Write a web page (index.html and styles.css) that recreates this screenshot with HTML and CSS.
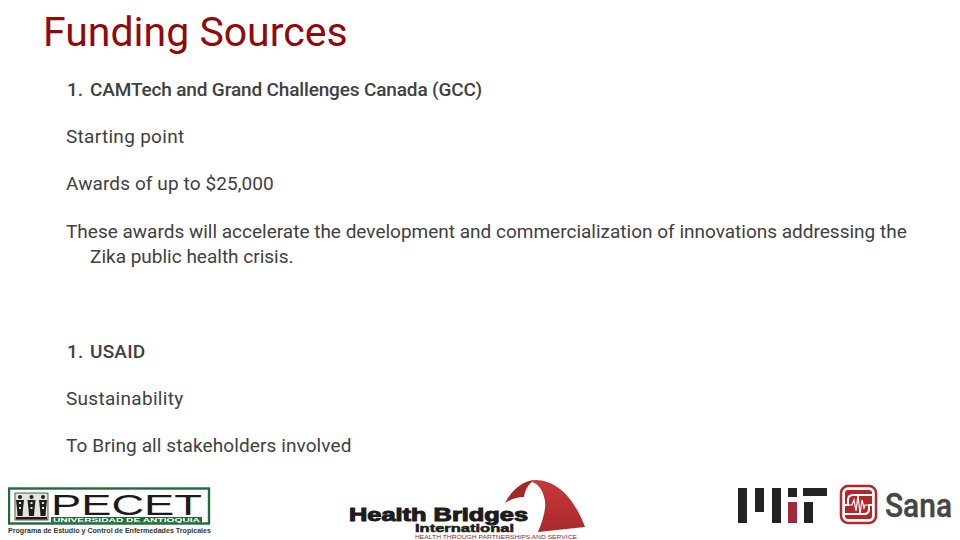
FILE: index.html
```html
<!DOCTYPE html>
<html lang="en">
<head>
  <meta charset="UTF-8" />
  <meta name="viewport" content="width=device-width, initial-scale=1.0"/>
  <title>Funding Sources</title>
  <link rel="stylesheet" href="styles.css">
</head>
<body>
  <div class="slide">
    <h1 class="title">Funding Sources</h1>

    <div class="content">
      <p class="item head"><span class="num">1.</span><span>CAMTech and Grand Challenges Canada (GCC)</span></p>
      <p class="item wide">Starting point</p>
      <p class="item">Awards of up to $25,000</p>
      <p class="item hang">These awards will accelerate the development and commercialization of innovations addressing the Zika public health crisis.</p>
      <p class="item head section"><span class="num">1.</span><span>USAID</span></p>
      <p class="item wide">Sustainability</p>
      <p class="item last">To Bring all stakeholders involved</p>
    </div>

    <div class="footer">
      <!-- PECET -->
      <svg class="logo logo-pecet" width="206" height="62" viewBox="8 478 206 62">
        <rect x="9" y="488.5" width="200" height="35" fill="#fff" stroke="#1f6b3a" stroke-width="2.4"/>
        <rect x="15" y="493" width="33" height="27" fill="#e4e4dc" stroke="#333" stroke-width="0.8"/>
        <g fill="#1d1d1d">
          <circle cx="20" cy="497" r="2"/><path d="M16 500 H24 L23 509 L22.5 516 H17.5 L17 509 Z"/>
          <circle cx="31.5" cy="497" r="2"/><path d="M27.5 500 H35.5 L34.5 509 L34 516 H29 L28.5 509 Z"/>
          <circle cx="43" cy="497" r="2"/><path d="M39 500 H47 L46 509 L45.5 516 H40.5 L40 509 Z"/>
          <rect x="16" y="517" width="31" height="2.5"/>
        </g>
        <g fill="#e4e4dc">
          <rect x="19" y="502" width="2" height="2"/><rect x="19" y="507" width="2" height="2"/>
          <rect x="30.5" y="502" width="2" height="2"/><rect x="30.5" y="507" width="2" height="2"/>
          <rect x="42" y="502" width="2" height="2"/><rect x="42" y="507" width="2" height="2"/>
        </g>
        <text class="pecet-big" x="51" y="515" textLength="151" lengthAdjust="spacingAndGlyphs">PECET</text>
        <rect x="51" y="517" width="151" height="5.5" fill="#1f6b3a"/>
        <text class="pecet-uni" x="53" y="521.8" textLength="147" lengthAdjust="spacingAndGlyphs">UNIVERSIDAD DE ANTIOQUIA</text>
        <text class="pecet-sub" x="8" y="533" textLength="203" lengthAdjust="spacingAndGlyphs">Programa de Estudio y Control de Enfermedades Tropicales</text>
      </svg>

      <!-- Health Bridges -->
      <svg class="logo logo-hb" width="240" height="62" viewBox="348 478 240 62">
        <defs>
          <linearGradient id="archBody" x1="0" y1="0" x2="0" y2="1">
            <stop offset="0" stop-color="#c9383a"/>
            <stop offset="1" stop-color="#a82a2c"/>
          </linearGradient>
        </defs>
        <path d="M505 503 C512 490 522 481 535 480 C528 484 525 490 524 497 C518 497 511 499 505 503 Z" fill="#a32628"/>
        <path d="M535 480 C558 480 575 500 585 527 L538 532 C544 518 547 505 544 497 C542 489 538 484 532 482 Z" fill="url(#archBody)"/>
        <text class="hb-main" x="349" y="521" textLength="179" lengthAdjust="spacingAndGlyphs">Health Bridges</text>
        <text class="hb-intl" x="415" y="532" textLength="99" lengthAdjust="spacingAndGlyphs">International</text>
        <text class="hb-tag" x="415" y="538.8" textLength="162" lengthAdjust="spacingAndGlyphs">HEALTH THROUGH PARTNERSHIPS AND SERVICE</text>
      </svg>

      <!-- MIT and Sana -->
      <svg class="logo logo-sana" width="223" height="62" viewBox="737 478 223 62">
        <g fill="#232323">
          <rect x="738" y="488" width="9" height="35"/>
          <rect x="755" y="488" width="9" height="24"/>
          <rect x="772" y="488" width="9" height="35"/>
          <rect x="788" y="488" width="9" height="9"/>
          <rect x="803" y="488" width="24" height="8"/>
          <rect x="804" y="502" width="9" height="21"/>
        </g>
        <rect x="788" y="502" width="9" height="21" fill="#a3283a"/>
        <rect x="841" y="486" width="35" height="37" rx="7" fill="#fff" stroke="#b3262a" stroke-width="2.5"/>
        <rect x="845" y="490" width="27" height="29" rx="3" fill="#b3262a"/>
        <path d="M872 495 H853 Q848 495 848 500 V505 H845 M872 505 H869 V509 Q869 514 864 514 H845" fill="none" stroke="#fff" stroke-width="2"/>
        <path d="M848 505 H852 L854 500 L856 511 L858 495 L860 514 L862 500 L864 508 L865 505 H869" fill="none" stroke="#fff" stroke-width="1.2"/>
        <text class="sana" x="885" y="517" textLength="67" lengthAdjust="spacingAndGlyphs">Sana</text>
      </svg>
    </div>
  </div>
</body>
</html>
```

FILE: styles.css
```css
html, body {
  margin: 0;
  padding: 0;
  height: 100%;
  overflow: hidden;
  background: #fff;
  font-family: Roboto, "Liberation Sans", sans-serif;
}

.slide {
  width: 960px;
  height: 540px;
  display: flex;
  flex-direction: column;
}

.title {
  margin: 0;
  padding: 9px 0 0 43px;
  font-size: 41px;
  line-height: 47px;
  font-weight: 400;
  color: #8f0a0a;
}

.content {
  padding: 21px 40px 0 66px;
  font-size: 19px;
  line-height: 25px;
  letter-spacing: 0.1px;
  color: #404040;
}

.item {
  margin: 0 0 22.2px;
}

.item.last {
  margin-bottom: 0;
}

.wide {
  letter-spacing: 0.3px;
}

.head {
  display: flex;
  font-weight: 500;
  letter-spacing: -0.15px;
}

.num {
  width: 24px;
  padding-left: 1px;
  box-sizing: border-box;
}

.hang {
  padding-left: 24px;
  text-indent: -24px;
  letter-spacing: 0;
}

.section {
  margin-top: 70px;
  letter-spacing: 0.2px;
}

.footer {
  margin-top: auto;
  display: flex;
  padding: 0 0 0 8px;
}

.logo {
  display: block;
}

.logo-hb {
  margin-left: 134px;
}

.logo-sana {
  margin-left: auto;
}

.pecet-big {
  font: 400 30px "Liberation Sans", sans-serif;
  fill: #1b1b1b;
}

.pecet-uni {
  font: 700 5.5px "Liberation Sans", sans-serif;
  fill: #fff;
}

.pecet-sub {
  font: 700 6.5px "Liberation Sans", sans-serif;
  fill: #333;
}

.hb-main {
  font: 700 18px "Liberation Sans", sans-serif;
  fill: #1c1c1c;
  stroke: #1c1c1c;
  stroke-width: 1px;
}

.hb-intl {
  font: 700 11px "Liberation Sans", sans-serif;
  fill: #1c1c1c;
  stroke: #1c1c1c;
  stroke-width: 0.5px;
}

.hb-tag {
  font: 400 5.5px "Liberation Sans", sans-serif;
  fill: #8f2a2a;
}

.sana {
  font: 500 34px Roboto, sans-serif;
  fill: #454545;
  stroke: #454545;
  stroke-width: 0.4px;
}
```
